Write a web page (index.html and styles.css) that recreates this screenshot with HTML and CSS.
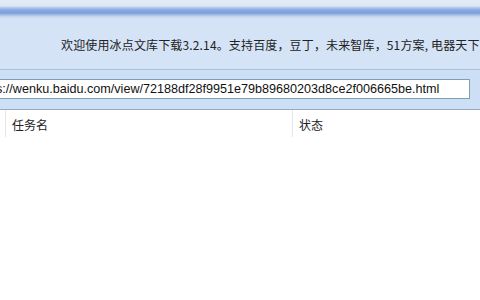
FILE: index.html
```html
<!DOCTYPE html>
<html lang="zh-CN">

<head>
    <meta charset="UTF-8">
    <title>冰点文库下载</title>
    <link rel="stylesheet" href="styles.css">
</head>

<body>
    <!-- Barra superior -->
    <div class="top-band"></div>

    <!-- Panel de bienvenida -->
    <div class="info-panel">
        <span class="welcome">欢迎使用冰点文库下载3.2.14。支持百度，豆丁，未来智库，51方案, 电器天下</span>
    </div>

    <!-- Barra de dirección -->
    <div class="address-bar">
        <input class="url-input" type="text" value="https://wenku.baidu.com/view/72188df28f9951e79b89680203d8ce2f006665be.html">
    </div>

    <!-- Lista de tareas -->
    <div class="task-list">
        <div class="list-header">
            <div class="col col-edge"></div>
            <div class="col col-name">任务名</div>
            <div class="col col-status">状态</div>
        </div>
        <div class="list-body"></div>
    </div>
</body>

</html>
```

FILE: styles.css
```css
/* Estilos generales */
html, body {
    margin: 0;
    padding: 0;
    height: 100%;
    overflow: hidden;
}

body {
    font-family: "Liberation Sans", "Noto Sans CJK SC", sans-serif;
    font-size: 12px;
    color: #1a1a1a;
    background: #ffffff;
    display: flex;
    flex-direction: column;
}

/* Franja superior con degradado */
.top-band {
    height: 19px;
    flex: none;
    background: linear-gradient(to bottom,
        #e4ecf8 0, #dce6f5 6px, #a9c3ea 8px, #86a9df 10px,
        #7c9fd8 13px, #a6bfe8 15px, #cbdaf1 17px, #d6e3f6 19px);
}

/* Panel con el mensaje de bienvenida */
.info-panel {
    height: 50px;
    flex: none;
    background: #d5e3f6;
    display: flex;
    align-items: center;
    padding-left: 61px;
    border-bottom: 1px solid #a9bfe2;
    white-space: nowrap;
    overflow: hidden;
}

.welcome {
    font-family: "Noto Sans CJK SC", sans-serif;
    font-size: 12px;
    letter-spacing: 0.15px;
    color: #222;
}

/* Barra de dirección */
.address-bar {
    flex: none;
    background: #cddff5;
    border-bottom: 1px solid #9aa9c2;
    padding-top: 9px;
    box-sizing: border-box;
    height: 40px;
}

.url-input {
    display: block;
    margin-left: -30px;
    width: 500px;
    height: 20px;
    box-sizing: border-box;
    border: 1px solid #7f9db9;
    padding: 0 4px;
    font-family: "Liberation Sans", sans-serif;
    font-size: 12.6px;
    color: #111;
    background: #ffffff;
    outline: none;
}

/* Lista de tareas */
.task-list {
    flex: 1;
    background: #ffffff;
}

.list-header {
    display: flex;
    height: 27px;
}

.col {
    display: flex;
    align-items: center;
    padding-top: 2px;
    font-family: "Noto Sans CJK SC", sans-serif;
    font-size: 12px;
    color: #222;
    box-sizing: border-box;
}

.col-edge {
    width: 6px;
    border-right: 1px solid #e6e6e6;
}

.col-name {
    width: 287px;
    padding-left: 6px;
    border-right: 1px solid #e6e6e6;
}

.col-status {
    padding-left: 6px;
}
```
